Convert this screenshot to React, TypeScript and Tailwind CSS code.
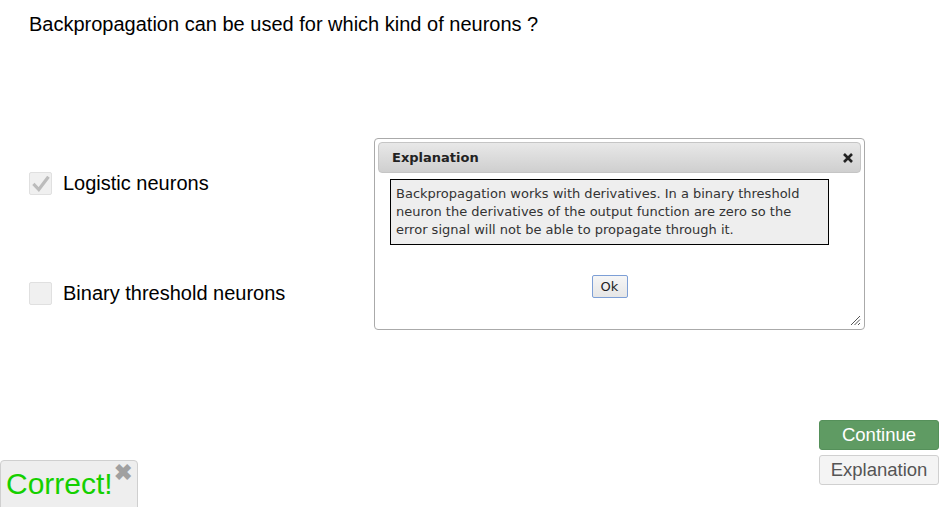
import React from "react";

function Check() {
  return (
    <svg width="18" height="16" viewBox="0 0 18 16" className="block">
      <path d="M2.5 9 L6.8 13.5 L15.5 2" fill="none" stroke="#bcbcbc" strokeWidth="3.2" strokeLinecap="square" />
    </svg>
  );
}

export default function App() {
  return (
    <div className="relative w-[944px] h-[507px] overflow-hidden bg-white text-black font-['Liberation_Sans',Arial,sans-serif] flex flex-col">
      <div className="ml-[29px] mt-[13px] text-[20px] leading-[23px]">
        Backpropagation can be used for which kind of neurons ?
      </div>

      <div className="ml-[29px] mt-[136px] flex flex-col gap-[87px]">
        <label className="flex items-center h-[23px] gap-[11px]">
          <span className="w-[23px] h-[23px] border border-[#e0e0e0] bg-[#f0f0f0] rounded-[2px] flex items-center justify-center">
            <Check />
          </span>
          <span className="text-[20px] leading-[23px]">Logistic neurons</span>
        </label>
        <label className="flex items-center h-[23px] gap-[11px]">
          <span className="w-[23px] h-[23px] border border-[#e0e0e0] bg-[#f0f0f0] rounded-[2px]" />
          <span className="text-[20px] leading-[23px]">Binary threshold neurons</span>
        </label>
      </div>

      <div className="self-end mr-[5px] mt-[115px] flex flex-col gap-[5px] w-[120px]">
        <button className="h-[30px] w-full rounded-[3px] border border-[#55905a] bg-[#5f9b63] text-white text-[18.5px] leading-[28px]">
          Continue
        </button>
        <button className="h-[30px] w-full rounded-[3px] border border-[#d0d0d0] bg-[#f4f4f4] text-[#555] text-[18.5px] leading-[28px]">
          Explanation
        </button>
      </div>

      {/* Correct notification */}
      <div className="absolute left-0 top-[460px] w-[138px] h-[52px] rounded-[4px] border border-[#cfcfcf] bg-[#eeeeee]">
        <span className="absolute left-[5px] top-[6px] text-[30px] leading-[34px] text-[#14d000]">Correct!</span>
        <span className="absolute left-[113px] top-[0px] text-[22px] leading-[24px] font-bold text-[#a0a0a0]">✖</span>
      </div>

      {/* Dialog */}
      <div className="absolute left-[374px] top-[138px] w-[491px] h-[192px] rounded-[4px] border border-[#aaaaaa] bg-white p-[3px] font-['DejaVu_Sans',Verdana,sans-serif]">
        <div className="h-[31px] rounded-[4px] border border-[#c5c5c5] bg-gradient-to-b from-[#e8e8e8] to-[#cfcfcf] flex items-center justify-between pl-[13px] pr-[6px]">
          <span className="text-[13px] font-bold text-[#222]">Explanation</span>
          <svg width="12" height="12" viewBox="0 0 12 12">
            <path d="M2 2 L10 10 M10 2 L2 10" stroke="#222" strokeWidth="2.6" strokeLinecap="butt" />
          </svg>
        </div>
        <div className="ml-[12px] mt-[6px] w-[439px]">
          <div className="border border-black bg-[#eeeeee] px-[5px] py-[5px] text-[13px] leading-[18px] text-[#333]">
            Backpropagation works with derivatives. In a binary threshold neuron the derivatives of the output function are zero so the error signal will not be able to propagate through it.
          </div>
          <div className="flex justify-center mt-[30px]">
            <button className="h-[23px] w-[36px] rounded-[2px] border border-[#7d9fd6] bg-gradient-to-b from-[#f6f6f6] to-[#e6e6e6] text-[13px] text-[#222] leading-[20px]">
              Ok
            </button>
          </div>
        </div>
        <svg className="absolute right-[3px] bottom-[3px]" width="11" height="11" viewBox="0 0 11 11">
          <path d="M10 1 L1 10 M10 4.5 L4.5 10 M10 8 L8 10" stroke="#555" strokeWidth="1" />
        </svg>
      </div>
    </div>
  );
}
